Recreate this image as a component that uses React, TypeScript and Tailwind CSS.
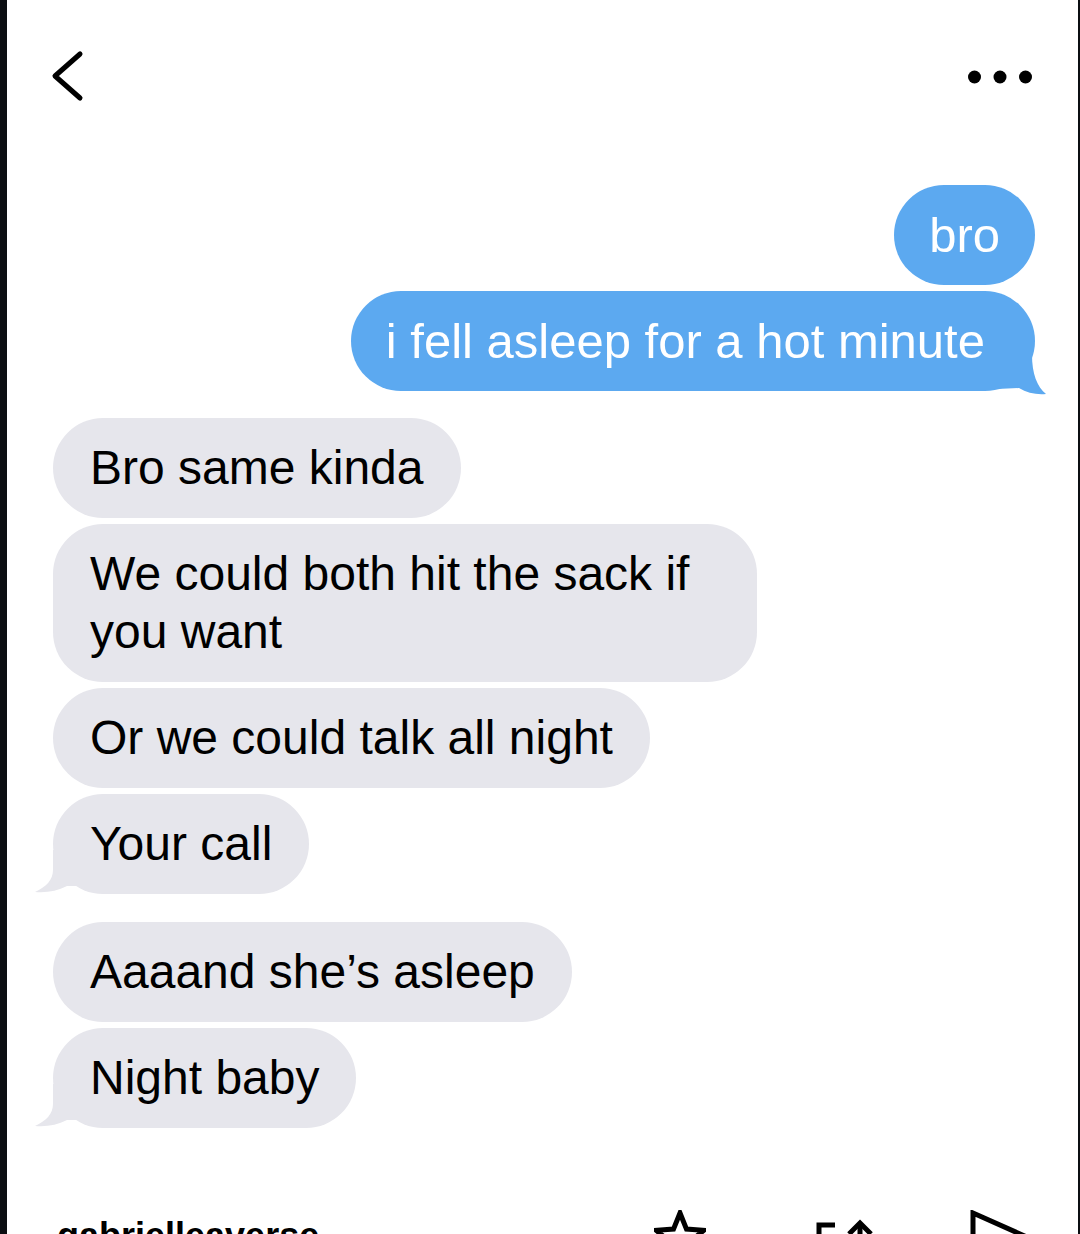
import React from 'react';

type Msg = { text: string; tail?: boolean };

const sent: Msg[] = [
  { text: 'bro' },
  { text: 'i fell asleep for a hot minute', tail: true },
];

const receivedGroups: Msg[][] = [
  [
    { text: 'Bro same kinda' },
    { text: 'We could both hit the sack if you want' },
    { text: 'Or we could talk all night' },
    { text: 'Your call', tail: true },
  ],
  [
    { text: 'Aaaand she\u2019s asleep' },
    { text: 'Night baby', tail: true },
  ],
];

function SentBubble({ msg }: { msg: Msg }) {
  return (
    <div className={`relative bg-[#5ca9f0] text-white text-[49px] leading-[58px] py-[21px] rounded-[50px] ${msg.tail ? 'pl-[35px] pr-[50px]' : 'px-[35px]'}`}>
      {msg.tail && (
        <svg className="absolute right-[-12px] bottom-[-4px]" width="50" height="50" viewBox="0 0 50 50">
          <path d="M0 0 L35 0 L35 10 C35 28 40 42 49 49 C40 50 30 48 22 43 L0 44 Z" fill="#5ca9f0" />
        </svg>
      )}
      <span className="relative">{msg.text}</span>
    </div>
  );
}

function ReceivedBubble({ msg }: { msg: Msg }) {
  return (
    <div className="relative max-w-[704px] bg-[#e6e6ec] text-black text-[48px] leading-[58px] py-[21px] px-[37px] rounded-[50px]">
      {msg.tail && (
        <svg className="absolute left-[-18px] bottom-0" width="44" height="44" viewBox="0 0 44 44">
          <path d="M18 0 L18 20 C18 30 11 37 0 42 C12 43 22 41 32 36 L44 36 L44 0 Z" fill="#e6e6ec" />
        </svg>
      )}
      <span className="relative">{msg.text}</span>
    </div>
  );
}

export default function App() {
  return (
    <div
      className="h-[1234px] w-full overflow-hidden bg-white border-l-[7px] border-r-2 border-[#0b0e12] flex flex-col"
      style={{ fontFamily: '"Liberation Sans", Arial, sans-serif' }}
    >
      {/* Header */}
      <div className="flex justify-between items-start h-[185px] shrink-0 pl-[41px] pr-[46px]">
        <svg className="mt-[48px]" width="40" height="56" viewBox="0 0 40 56">
          <path d="M32 6 L7 28 L32 50" fill="none" stroke="#000" strokeWidth="5" strokeLinecap="round" strokeLinejoin="round" />
        </svg>
        <svg className="mt-[70px]" width="64" height="14" viewBox="0 0 64 14">
          <circle cx="6.5" cy="7" r="6.5" fill="#000" />
          <circle cx="32" cy="7" r="6.5" fill="#000" />
          <circle cx="57.5" cy="7" r="6.5" fill="#000" />
        </svg>
      </div>

      {/* Sent */}
      <div className="flex flex-col items-end gap-[6px] pr-[43px]">
        {sent.map((m, i) => (
          <SentBubble key={i} msg={m} />
        ))}
      </div>

      {/* Received */}
      <div className="flex flex-col gap-[28px] pl-[46px] mt-[27px]">
        {receivedGroups.map((group, gi) => (
          <div key={gi} className="flex flex-col items-start gap-[6px]">
            {group.map((m, i) => (
              <ReceivedBubble key={i} msg={m} />
            ))}
          </div>
        ))}
      </div>

      {/* Post footer */}
      <div className="flex items-start mt-[82px] shrink-0">
        <div className="w-[597px] pl-[50px] mt-[6px] text-[36px] leading-[40px] font-bold text-black">
          gabrielleaverse
        </div>
        <svg className="ml-[50px]" width="52" height="52" viewBox="0 0 52 52">
          <polygon
            points="26,3 32.5,19.1 49.8,20.3 36.5,31.4 40.7,48.2 26,39 11.3,48.2 15.5,31.4 2.2,20.3 19.5,19.1"
            fill="none"
            stroke="#000"
            strokeWidth="5"
            strokeLinejoin="miter"
          />
        </svg>
        <svg className="ml-[106px]" width="64" height="52" viewBox="0 0 64 52">
          <path d="M23 15 L7 15 L7 52" fill="none" stroke="#000" strokeWidth="5" />
          <path d="M48 16 L48 52" fill="none" stroke="#000" strokeWidth="5" />
          <path d="M37 24 L48 13 L59 24" fill="none" stroke="#000" strokeWidth="5" />
        </svg>
        <svg className="ml-[89px]" width="70" height="56" viewBox="0 0 70 56">
          <path d="M8 3 L64 28 L8 53 Z" fill="none" stroke="#000" strokeWidth="5" strokeLinejoin="miter" />
        </svg>
      </div>
    </div>
  );
}
